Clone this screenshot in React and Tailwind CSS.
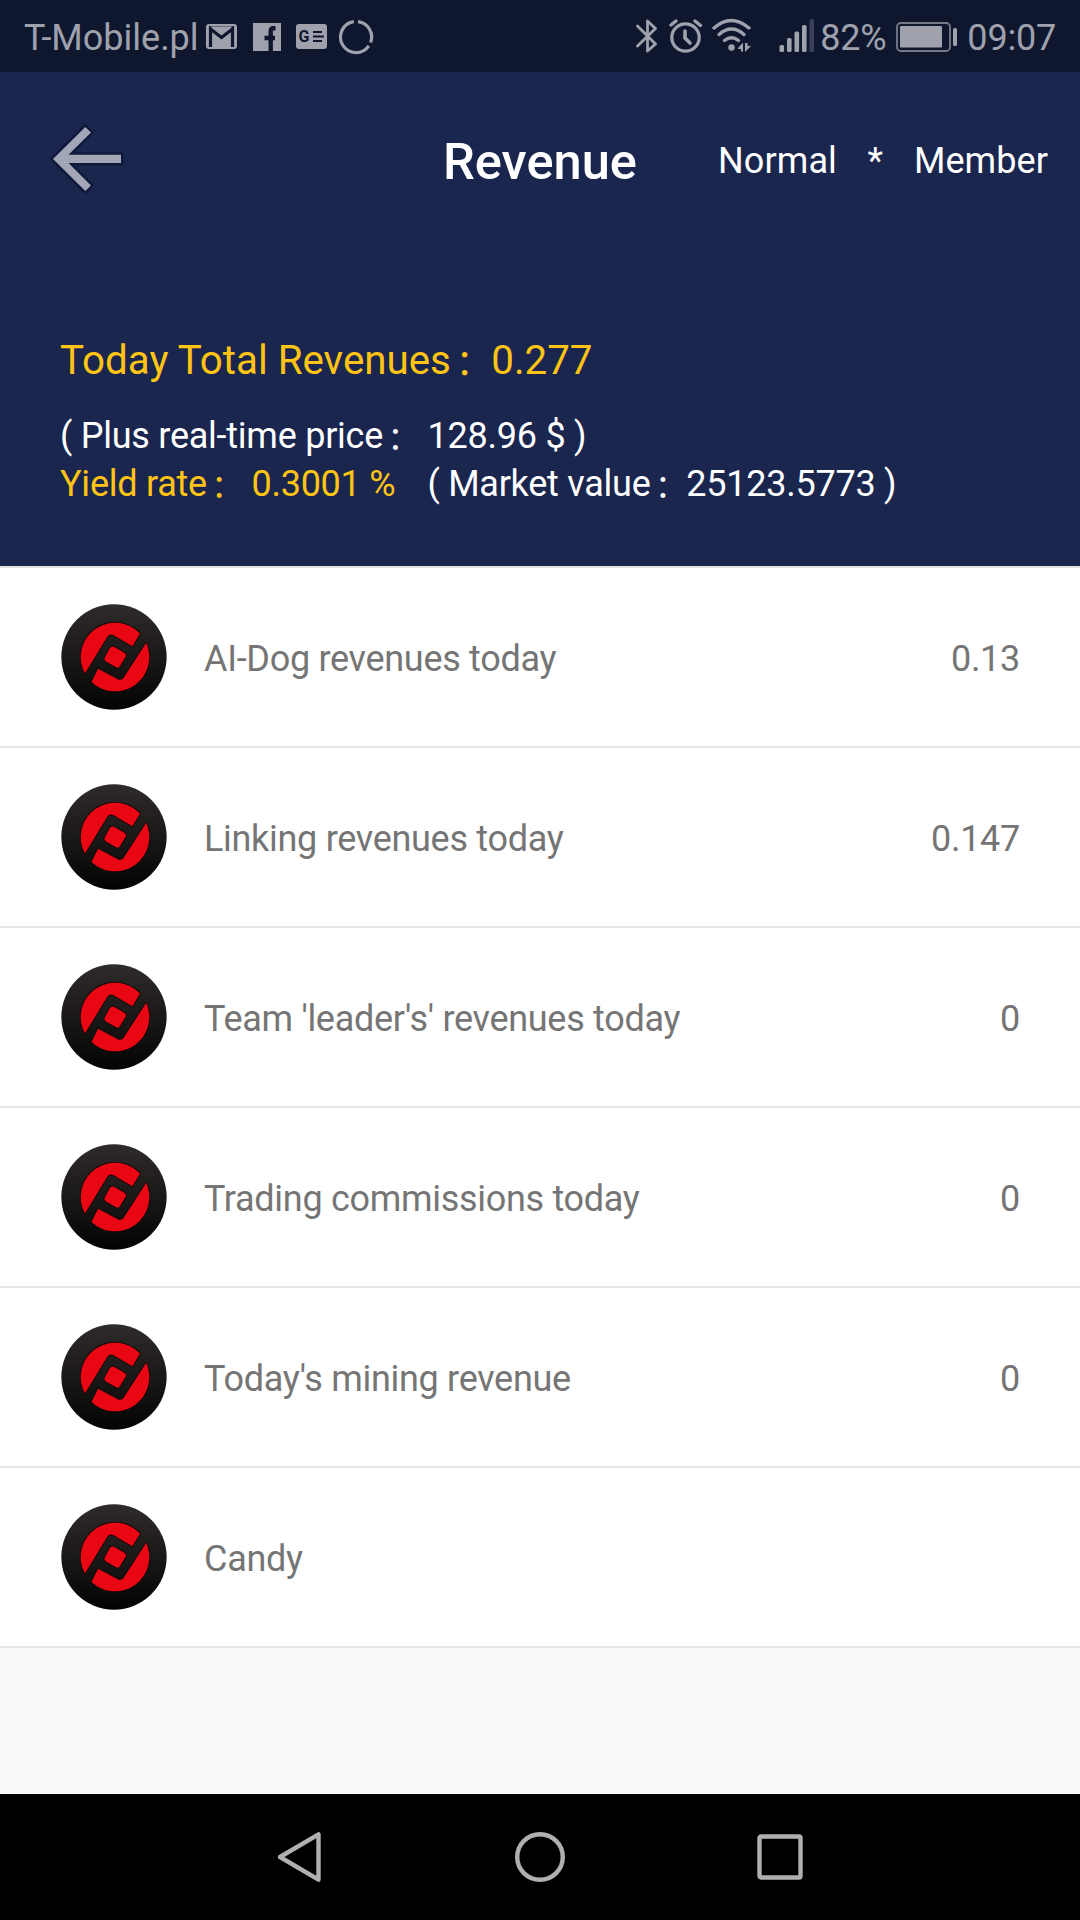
const items = [
  { label: 'AI-Dog revenues today', value: '0.13' },
  { label: 'Linking revenues today', value: '0.147' },
  { label: "Team 'leader's' revenues today", value: '0' },
  { label: 'Trading commissions today', value: '0' },
  { label: "Today's mining revenue", value: '0' },
  { label: 'Candy', value: '' },
];

function NotificationIcons() {
  return (
    <div className="flex items-center">
      <svg className="w-[31px] h-[25px]" viewBox="0 0 31 25" fill="none">
        <rect width="31" height="25" rx="3" fill="#9fa2ad" />
        <path d="M4.5 23V5L15.5 13.5L26.5 5V23" stroke="#0f172f" strokeWidth="3.2" />
        <path d="M3 2.8H28" stroke="#0f172f" strokeWidth="1.2" />
        <path d="M5 2.5L15.5 10.5L26 2.5Z" fill="#9fa2ad" />
      </svg>
      <svg className="w-[28px] h-[28px] ml-4" viewBox="0 0 28 28" fill="none">
        <rect width="28" height="28" fill="#9fa2ad" />
        <path d="M22.5 5.3H20.5C18.5 5.3 17.7 6.4 17.7 8.5V28M11.5 15H22" stroke="#0f172f" strokeWidth="4.4" />
      </svg>
      <svg className="w-[31px] h-[25px] ml-[15px]" viewBox="0 0 31 25">
        <rect width="31" height="25" rx="3" fill="#9fa2ad" />
        <text x="2.5" y="18" fontFamily="Roboto, sans-serif" fontSize="16" fontWeight="700" fill="#0f172f">G</text>
        <path d="M17 8H26M17 12.5H28M17 17H26" stroke="#0f172f" strokeWidth="2" />
      </svg>
      <svg className="w-[36px] h-[36px] ml-[11px]" viewBox="0 0 36 36" fill="none">
        <path d="M20 2.6A15.5 15.5 0 0 1 32.6 23.5M30.8 26.8A15.5 15.5 0 1 1 15.8 2.7" stroke="#9fa2ad" strokeWidth="3.2" />
      </svg>
    </div>
  );
}

function ConnectionIcons() {
  return (
    <div className="flex items-center">
      <svg className="w-[22px] h-[36px]" viewBox="0 0 22 36" fill="none">
        <path d="M1.5 8L19.5 26L11.5 33V3L19.5 10.5L1.5 28" stroke="#9fa2ad" strokeWidth="2.8" strokeLinejoin="round" strokeLinecap="round" />
      </svg>
      <svg className="w-[34px] h-[36px] ml-[11px]" viewBox="0 0 34 36" fill="none" stroke="#9fa2ad" strokeLinecap="round">
        <circle cx="16.5" cy="19.5" r="13.7" strokeWidth="3.2" />
        <path d="M16 13V20L21 25" strokeWidth="3.6" />
        <path d="M2 7L7 3M26 3L31.5 7.5" strokeWidth="3.4" />
      </svg>
      <svg className="w-[40px] h-[36px] ml-[9px]" viewBox="0 0 40 36" fill="none" stroke="#9fa2ad" strokeLinecap="round">
        <path d="M2 10Q19 -5 37 10" strokeWidth="3.4" />
        <path d="M7 16.5Q19.5 5.5 32 16.5" strokeWidth="3.4" />
        <path d="M12.5 22.5Q19.5 17 26.5 22.5" strokeWidth="3.4" />
        <circle cx="19.5" cy="29.5" r="3.2" fill="#9fa2ad" stroke="none" />
        <path d="M26 30L31 24.5V33.5H29V31H26ZM33 25V34L39 28H35.5V25Z" fill="#9fa2ad" stroke="none" />
      </svg>
      <svg className="w-[36px] h-[36px] ml-[27px]" viewBox="0 0 36 36" fill="#9fa2ad">
        <rect x="0.5" y="27" width="4.6" height="7" rx="1.6" />
        <rect x="8" y="20" width="4.6" height="14" rx="1.6" />
        <rect x="15.5" y="13.5" width="4.6" height="20.5" rx="1.6" />
        <rect x="23" y="7" width="4.6" height="27" rx="1.6" />
        <rect x="30.5" y="1" width="4.6" height="33" rx="1.6" fill="#3a4157" />
      </svg>
    </div>
  );
}

function StatusBar() {
  return (
    <div className="flex items-center h-[72px] bg-[#0f172f] text-[#9fa2ad] text-[36px] leading-none">
      <span className="w-[182px] pl-6 pt-[3px] whitespace-nowrap">T-Mobile.pl</span>
      <div className="pl-6 pt-px">
        <NotificationIcons />
      </div>
      <div className="flex items-center ml-auto pr-[24px]">
        <ConnectionIcons />
        <span className="w-[76px] pl-[5px] pt-[3px] tracking-[-0.3px]">82%</span>
        <svg className="w-[62px] h-[30px] ml-[5px] mt-[2px]" viewBox="0 0 62 30" fill="none">
          <rect x="1" y="1" width="53" height="28" rx="4" stroke="#777b89" strokeWidth="1.8" />
          <rect x="4" y="4" width="42" height="21.5" rx="1" fill="#9fa2ad" />
          <rect x="57" y="6" width="4" height="18" rx="1.5" fill="#9fa2ad" />
        </svg>
        <span className="ml-[9px] pt-[3px] tracking-[-0.2px]">09:07</span>
      </div>
    </div>
  );
}

function BackArrow() {
  return (
    <svg className="w-[80px] h-[80px]" viewBox="8 9 80 80">
      <path
        d="M13 49L45.3 17L51 22.5L28.5 44.8H81V53H28.5L51 75.5L45.3 81Z"
        fill="#a3a6b7"
        stroke="#10193a"
        strokeWidth="5"
        strokeLinejoin="round"
        paintOrder="stroke"
      />
    </svg>
  );
}

// Full-width colon, slightly smaller than the text but still one em wide
function Colon() {
  return <span className="relative top-[0.03em] pl-[0.14em] text-[0.88em] leading-none">：</span>;
}

function Header() {
  return (
    <header className="h-[494px] bg-[#1a264e] text-white text-[36px]">
      <div className="grid grid-cols-[443px_275px_1fr] items-center h-[178px]">
        <div className="pl-12 pb-[4px]">
          <BackArrow />
        </div>
        <h1 className="text-[50.6px] leading-none font-medium pt-[2px]">Revenue</h1>
        <span className="leading-none whitespace-pre tracking-[0.1px] [word-spacing:1.2px]">Normal   *   Member</span>
      </div>
      <div className="pl-[60px] pt-[83px] whitespace-pre tracking-[-0.25px]">
        <p className="text-[40.3px] leading-[56px] text-[#ffc414] tracking-normal">
          Today Total Revenues<Colon />0.277
        </p>
        <p className="mt-[23px] leading-[48px]">( Plus real-time price<Colon /> 128.96 $ )</p>
        <p className="leading-[48px]">
          <span className="text-[#ffc414]">Yield rate<Colon /> 0.3001 %</span>
          <span className="ml-[32px]">( Market value<Colon />25123.5773 )</span>
        </p>
      </div>
    </header>
  );
}

function CoinLogo() {
  return (
    <svg className="w-[106px] h-[106px]" viewBox="33 30 318 318">
      <defs>
        <linearGradient id="coin" x1="0" y1="0" x2="0" y2="1">
          <stop offset="0" stopColor="#2e2b2a" />
          <stop offset="0.5" stopColor="#1b1918" />
          <stop offset="1" stopColor="#030303" />
        </linearGradient>
      </defs>
      <circle cx="192" cy="189" r="158" fill="url(#coin)" />
      <g fill="#e90713" stroke="#120606" strokeWidth="5" paintOrder="stroke" strokeLinejoin="round">
        <path d="M104.6 238.4A103 103 0 0 1 270.3 118.8L247 157L191 124Q179 118 172 128Z" />
        <path d="M288.7 146.2A103 103 0 0 1 124.6 264.2L144 224L202 255Q215 262 222 250Z" />
        <path d="M179 163Q184 154 193 159L223 176Q231 181 226 190L210 216Q205 224 197 219L169 203Q160 198 165 189Z" />
      </g>
    </svg>
  );
}

function RevenueRow({ label, value }) {
  return (
    <li className="flex items-center h-[180px] pl-[61px] pr-[60px] border-b-2 border-[#e5e5e5] bg-white text-[36px] text-[#757575] tracking-[-0.3px]">
      <CoinLogo />
      <span className="ml-[37px] pt-[3px]">{label}</span>
      <span className="ml-auto pt-[3px]">{value}</span>
    </li>
  );
}

function NavigationBar() {
  return (
    <nav className="flex items-center justify-center gap-[190px] h-[126px] bg-black">
      <svg className="w-[50px] h-[52px]" viewBox="0 0 50 52" fill="none">
        <path d="M43.5 3.3V48.7L5 26Z" stroke="#b0b0b0" strokeWidth="4.4" strokeLinejoin="round" />
      </svg>
      <svg className="w-[50px] h-[50px]" viewBox="0 0 50 50" fill="none">
        <circle cx="25" cy="25" r="22.8" stroke="#b0b0b0" strokeWidth="4.4" />
      </svg>
      <svg className="w-[50px] h-[50px]" viewBox="0 0 50 50" fill="none">
        <rect x="4.5" y="4.5" width="41" height="41" rx="1.5" stroke="#b0b0b0" strokeWidth="4.4" />
      </svg>
    </nav>
  );
}

export default function App() {
  return (
    <div className="flex flex-col w-[1080px] h-[1920px] overflow-hidden bg-[#fafafa] font-[Roboto,'Noto_Sans_CJK_SC',sans-serif]">
      <StatusBar />
      <Header />
      <ul className="border-t-2 border-[#e5e5e5]">
        {items.map((item) => (
          <RevenueRow key={item.label} label={item.label} value={item.value} />
        ))}
      </ul>
      <div className="flex-1" />
      <NavigationBar />
    </div>
  );
}
